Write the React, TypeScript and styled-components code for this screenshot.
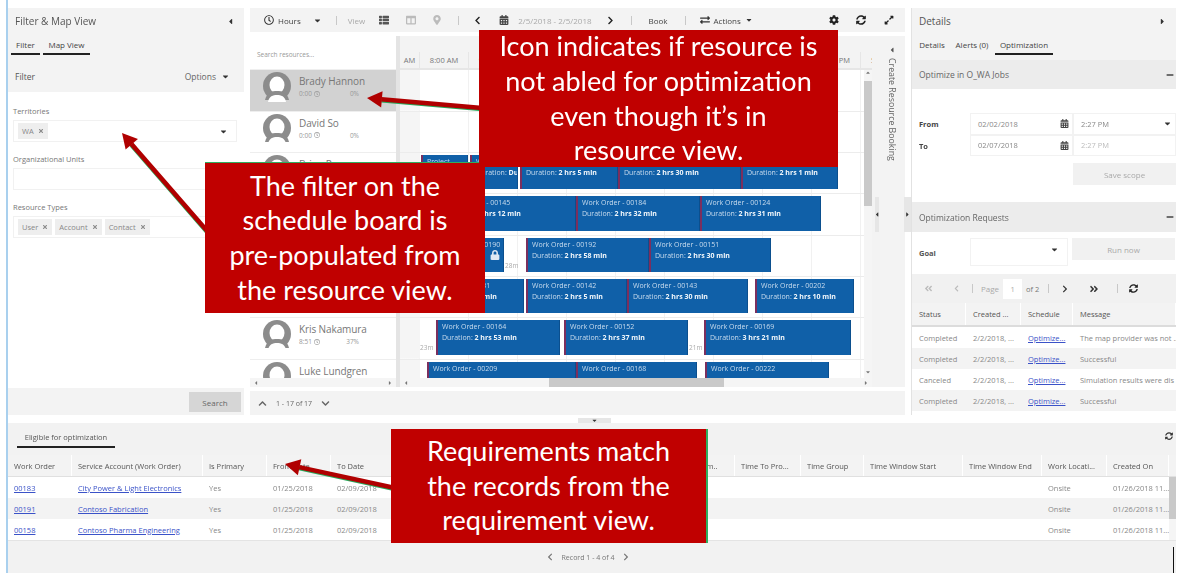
import styled, { createGlobalStyle } from "styled-components";
import {
  FaAngleDoubleLeft,
  FaAngleDoubleRight,
  FaCalendarAlt,
  FaCaretDown,
  FaCaretLeft,
  FaCaretRight,
  FaChevronDown,
  FaChevronLeft,
  FaChevronRight,
  FaChevronUp,
  FaCog,
  FaColumns,
  FaExchangeAlt,
  FaExpandAlt,
  FaLock,
  FaMapMarkerAlt,
  FaMinus,
  FaRegClock,
  FaSyncAlt,
  FaTimes,
  FaThList,
} from "react-icons/fa";

const GlobalStyle = createGlobalStyle`
  html, body {
    margin: 0;
    padding: 0;
    background: #fff;
    overflow: hidden;
  }
  * {
    box-sizing: border-box;
  }
`;

const Page = styled.div`
  position: relative;
  width: 1180px;
  height: 579px;
  overflow: hidden;
  background: #fff;
  font-family: "Open Sans", "Liberation Sans", sans-serif;
`;

// the whole app sits in a blurry pasted screenshot
const Screen = styled.div`
  width: 1170px;
  height: 573px;
  margin-left: 6px;
  padding-top: 8px;
  border-left: 2px solid #a9d0ee;
  filter: blur(0.7px);
  color: #666;
  font-size: 8px;
`;

const TopRow = styled.div`
  display: flex;
  gap: 6px;
  height: 407px;
`;

const SidePanel = styled.aside<{ $width: number }>`
  display: flex;
  flex-direction: column;
  width: ${({ $width }) => $width}px;
  flex: none;
`;

const PanelHead = styled.div`
  display: flex;
  align-items: center;
  justify-content: space-between;
  height: 26px;
  padding: 0 9px 0 7px;
  background: #f3f3f3;
  font-size: 10px;
  color: #555;
`;

const Tabs = styled.div`
  display: flex;
  height: 26px;
  gap: 3px;
  padding: 0 3px;
  background: #f3f3f3;
`;

const Tab = styled.div<{ $active?: boolean; $width: number }>`
  width: ${({ $width }) => $width}px;
  height: 21px;
  padding-top: 5px;
  text-align: center;
  font-size: 8px;
  color: #444;
  border-bottom: ${({ $active }) => ($active ? "2px solid #222" : "2px solid transparent")};
`;

const FilterBar = styled.div`
  display: flex;
  align-items: center;
  justify-content: space-between;
  height: 32px;
  padding: 0 14px 0 7px;
  background: #f3f3f3;
  font-size: 8.5px;
  color: #555;
`;

const OptionsLink = styled.span`
  display: flex;
  align-items: center;
  gap: 5px;
  color: #666;
`;

const FilterBody = styled.div`
  flex: 1;
  padding: 14px 7px 0 5px;
  background: #fff;
`;

const FieldLabel = styled.div`
  height: 14px;
  font-size: 7.5px;
  color: #777;
`;

const FieldBox = styled.div`
  display: flex;
  align-items: center;
  justify-content: space-between;
  gap: 3px;
  height: 22px;
  margin-bottom: 12px;
  padding: 0 8px 0 4px;
  border: 1px solid #f1f1f1;
`;

const ChipRow = styled.div`
  display: flex;
  gap: 3px;
`;

const Chip = styled.span`
  display: flex;
  align-items: center;
  gap: 4px;
  height: 16px;
  padding: 0 4px;
  background: #eeeeee;
  color: #888;
  font-size: 7.5px;
`;

const SearchBar = styled.div`
  display: flex;
  justify-content: flex-end;
  align-items: flex-start;
  height: 27px;
  padding: 4px 3px 0 0;
  background: #f3f3f3;
`;

const FlatButton = styled.div<{ $dark?: boolean; $width: number; $height?: number }>`
  display: flex;
  align-items: center;
  justify-content: center;
  width: ${({ $width }) => $width}px;
  height: ${({ $height }) => $height ?? 20}px;
  background: ${({ $dark }) => ($dark ? "#d6d6d6" : "#f1f1f1")};
  color: ${({ $dark }) => ($dark ? "#666" : "#aaa")};
  font-size: 8px;
`;

const Center = styled.main`
  display: flex;
  flex-direction: column;
  width: 655px;
  flex: none;
`;

const Toolbar = styled.div`
  display: flex;
  align-items: center;
  height: 25px;
  padding-left: 14px;
  background: #f3f3f3;
  font-size: 8px;
  color: #666;
`;

const ToolItem = styled.span<{ $left?: number; $dim?: boolean }>`
  display: flex;
  align-items: center;
  gap: 4px;
  margin-left: ${({ $left }) => $left ?? 0}px;
  color: ${({ $dim }) => ($dim ? "#aaa" : "#444")};
  font-size: 8px;
  white-space: nowrap;
`;

const ToolDivider = styled.span<{ $left: number }>`
  width: 1px;
  height: 9px;
  margin-left: ${({ $left }) => $left}px;
  background: #c8c8c8;
`;

const BoardArea = styled.div`
  display: flex;
  height: 351px;
  margin-top: 4px;
  background: #f3f3f3;
`;

const ResourceColumn = styled.div`
  display: flex;
  flex-direction: column;
  width: 146px;
  flex: none;
  background: #fff;
`;

const SearchResources = styled.div`
  display: flex;
  align-items: center;
  height: 34px;
  padding: 3px 0 0 7px;
  color: #999;
  font-size: 6.5px;
  border-bottom: 1px solid #efefef;
`;

const ResourceList = styled.div`
  flex: 1;
  overflow: hidden;
`;

const ResourceRow = styled.div<{ $selected?: boolean }>`
  display: flex;
  height: 41.3px;
  padding: 2px 0 0 13px;
  gap: 8px;
  background: ${({ $selected }) => ($selected ? "#d2d2d2" : "#fff")};
  border-bottom: 1px solid #eeeeee;
`;

const ResourceInfo = styled.div`
  display: flex;
  flex-direction: column;
  padding-top: 3px;
`;

const ResourceName = styled.div`
  font-size: 10px;
  line-height: 13px;
  color: #777;
  letter-spacing: -0.1px;
`;

const ResourceStats = styled.div`
  display: flex;
  align-items: center;
  gap: 2px;
  width: 60px;
  margin-top: 1px;
  font-size: 6.5px;
  color: #999;
`;

const StatPercent = styled.span`
  margin-left: auto;
`;

const HScrollBar = styled.div<{ $height?: number }>`
  display: flex;
  align-items: center;
  justify-content: space-between;
  height: ${({ $height }) => $height ?? 9}px;
  padding: 0 3px;
  background: #f5f5f5;
  color: #777;
  font-size: 6px;
`;

const Thumb = styled.div<{ $width: number }>`
  width: ${({ $width }) => $width}px;
  height: 100%;
  background: #c9c9c9;
`;

const BoardMain = styled.div`
  display: flex;
  flex-direction: column;
  width: 476px;
  border-left: 4px solid #e4e4e4;
  flex: none;
`;

const TimeHeader = styled.div`
  display: flex;
  height: 34px;
  padding-top: 16px;
  overflow: hidden;
  background: #f3f3f3;
  border-bottom: 2px solid #e6e6e6;
`;

const TimeCell = styled.div<{ $width: number }>`
  width: ${({ $width }) => $width}px;
  flex: none;
  padding-top: 3px;
  text-align: center;
  font-size: 7.5px;
  color: #777;
  border-right: 1px solid #e6e6e6;
  overflow: hidden;
  white-space: nowrap;
`;

const BoardBody = styled.div`
  display: flex;
  flex: 1;
  overflow: hidden;
`;

const Rows = styled.div`
  flex: 1;
  overflow: hidden;
  background: #fff;
`;

const BoardRow = styled.div`
  position: relative;
  height: 41.3px;
  border-bottom: 1px solid #ececec;
  background: linear-gradient(#f5f5f5, #f5f5f5) left / 20px 100% no-repeat,
    repeating-linear-gradient(90deg, transparent 20px, transparent 68px, #f1f1f1 68px, #f1f1f1 69px);
`;

const Booking = styled.div`
  position: absolute;
  top: 2px;
  bottom: 4px;
  overflow: hidden;
  padding: 1px 0 0 4px;
  background: #1060a8;
  border-left: 2px solid #7b2f5e;
  border-right: 1px solid #0b4f8e;
  color: #c9dcee;
  font-size: 7px;
  line-height: 11px;
  white-space: nowrap;
`;

const BookingStrong = styled.b`
  color: #f2f7fb;
`;

const LockMark = styled.span`
  position: absolute;
  right: 3px;
  top: 12px;
  color: #dfe9f3;
  font-size: 10px;
`;

const GapLabel = styled.span`
  position: absolute;
  top: 25px;
  font-size: 6.5px;
  color: #aaa;
`;

const VScroll = styled.div`
  display: flex;
  flex-direction: column;
  width: 8px;
  flex: none;
  background: #f5f5f5;
  color: #777;
  font-size: 6px;
`;

const VThumb = styled.div`
  height: 125px;
  margin-top: 2px;
  background: #c9c9c9;
`;

const ScrollCaret = styled.span<{ $bottom?: boolean }>`
  display: flex;
  justify-content: center;
  height: 9px;
  margin-top: ${({ $bottom }) => ($bottom ? "auto" : "0")};
`;

const BookingRail = styled.div`
  display: flex;
  flex: 1;
  flex-direction: column;
  align-items: center;
  padding-top: 10px;
  margin-left: 6px;
  color: #555;
`;

const RailText = styled.div`
  margin-top: 4px;
  writing-mode: vertical-rl;
  font-size: 8.8px;
  white-space: nowrap;
  color: #666;
`;

const BoardFooter = styled.div`
  display: flex;
  align-items: center;
  height: 24px;
  margin-top: 4px;
  padding-left: 8px;
  gap: 9px;
  background: #f3f3f3;
  color: #666;
  font-size: 7px;
`;

const DetailPanel = styled(SidePanel)`
  border-left: 1px solid #e2e2e2;
`;

const SectionHead = styled.div<{ $height: number }>`
  display: flex;
  align-items: center;
  justify-content: space-between;
  height: ${({ $height }) => $height}px;
  padding: 0 2px 0 7px;
  background: #ececec;
  color: #666;
  font-size: 8.5px;
`;

const ScopeBody = styled.div`
  display: flex;
  flex-direction: column;
  height: 113px;
  padding-top: 24px;
  background: #fff;
`;

const ScopeRow = styled.div`
  display: flex;
  height: 21.5px;
`;

const ScopeLabel = styled.div`
  width: 58px;
  padding: 6px 0 0 7px;
  font-size: 7.5px;
  font-weight: 700;
  color: #444;
  flex: none;
`;

const ScopeInput = styled.div<{ $width: number; $dim?: boolean }>`
  display: flex;
  align-items: center;
  justify-content: space-between;
  width: ${({ $width }) => $width}px;
  padding: 0 3px 0 7px;
  border: 1px solid #f2f2f2;
  color: ${({ $dim }) => ($dim ? "#bbb" : "#888")};
  font-size: 7.5px;
  flex: none;
`;

const ScopeActions = styled.div`
  display: flex;
  justify-content: flex-end;
  margin-top: 7px;
`;

const GoalRow = styled.div`
  display: flex;
  height: 42px;
  padding-top: 6px;
  background: #fff;
`;

const GoalLabel = styled(ScopeLabel)`
  padding-top: 10px;
  color: #555;
`;

const GoalSelect = styled.div`
  display: flex;
  justify-content: flex-end;
  width: 98px;
  height: 28px;
  padding: 6px 8px 0 0;
  border: 1px solid #f2f2f2;
  color: #333;
  flex: none;
`;

const RunWrap = styled.div`
  margin-left: 4px;
`;

const Pager = styled.div`
  display: flex;
  align-items: center;
  height: 29px;
  padding-left: 12px;
  background: #f1f1f1;
  color: #777;
  font-size: 7.5px;
`;

const PageInput = styled.span`
  display: flex;
  align-items: center;
  justify-content: center;
  width: 19px;
  height: 20px;
  margin: 0 4px;
  background: #fff;
  color: #aaa;
`;

const SmallGrid = styled.div<{ $head?: boolean; $shade?: boolean }>`
  display: grid;
  grid-template-columns: 54px 55px 52px 1fr;
  align-items: center;
  height: ${({ $head }) => ($head ? 24 : 21)}px;
  background: ${({ $head, $shade }) => ($head || $shade ? "#f3f3f3" : "#fff")};
  border-bottom: ${({ $head }) => ($head ? "2px solid #dcdcdc" : "0")};
  color: ${({ $head }) => ($head ? "#555" : "#888")};
  font-size: 7.5px;
`;

const SmallCell = styled.div<{ $head?: boolean }>`
  display: flex;
  align-items: center;
  height: 100%;
  padding-left: 7px;
  white-space: nowrap;
  overflow: hidden;
  border-right: ${({ $head }) => ($head ? "1px solid #fff" : "0")};
`;

const Link = styled.span`
  color: #3a52c8;
  text-decoration: underline;
`;

const BottomPanel = styled.section`
  display: flex;
  flex-direction: column;
  height: 150px;
  margin-top: 8px;
  background: #f2f2f2;
`;

const BottomTabs = styled.div`
  display: flex;
  align-items: flex-start;
  justify-content: space-between;
  height: 32px;
  padding: 9px 3px 0 9px;
`;

const BottomTab = styled.div`
  width: 98px;
  height: 16px;
  border-bottom: 2px solid #222;
  text-align: center;
  font-size: 7.5px;
  color: #555;
  white-space: nowrap;
`;

const TABLE_COLS = "64px 131px 64px 64px 64px 275px 65px 66px 63px 99px 79px 65px 62px 1fr";

const TableRow = styled.div<{ $head?: boolean; $shade?: boolean }>`
  display: grid;
  grid-template-columns: ${TABLE_COLS};
  height: ${({ $head }) => ($head ? 22 : 21)}px;
  background: ${({ $head, $shade }) => ($head || $shade ? "#f3f3f3" : "#fff")};
  border-bottom: ${({ $head }) => ($head ? "1px solid #e0e0e0" : "0")};
  color: ${({ $head }) => ($head ? "#555" : "#888")};
  font-size: 7.5px;
`;

const TableCell = styled.div<{ $head?: boolean }>`
  display: flex;
  align-items: center;
  padding-left: 6px;
  white-space: nowrap;
  overflow: hidden;
  border-right: ${({ $head }) => ($head ? "1px solid #fff" : "0")};
`;

const TableScroll = styled.div<{ $thumb?: boolean }>`
  background: ${({ $thumb }) => ($thumb ? "#c9c9c9" : "#f5f5f5")};
`;

const RecordPager = styled.div`
  position: relative;
  display: flex;
  flex: 1;
  align-items: center;
  justify-content: center;
  gap: 8px;
  border-top: 1px solid #e4e4e4;
  color: #777;
  font-size: 7px;
  padding-right: 8px;
`;

const EdgeMark = styled.span`
  position: absolute;
  right: 2px;
  top: 6px;
  bottom: 0;
  width: 1px;
  background: #111;
`;

// little collapse tabs that sit on the splitters between panels
const SplitHandle = styled.div<{ $x: number; $y: number; $w: number; $h: number }>`
  position: absolute;
  left: ${({ $x }) => $x}px;
  top: ${({ $y }) => $y}px;
  width: ${({ $w }) => $w}px;
  height: ${({ $h }) => $h}px;
  display: flex;
  align-items: center;
  justify-content: center;
  background: #e6e6e6;
  color: #333;
`;

const Callout = styled.div<{
  $x: number;
  $y: number;
  $w: number;
  $h: number;
  $z: number;
  $edge?: "top" | "right";
}>`
  position: absolute;
  left: ${({ $x }) => $x}px;
  top: ${({ $y }) => $y}px;
  width: ${({ $w }) => $w}px;
  height: ${({ $h }) => $h}px;
  z-index: ${({ $z }) => $z};
  display: flex;
  flex-direction: column;
  justify-content: center;
  background: #c00000;
  border-right: ${({ $edge }) => ($edge === "right" ? "2px solid #2fae5f" : "0")};
  border-top: ${({ $edge }) => ($edge === "top" ? "1px solid #2fae5f" : "0")};
  color: #fff;
  font-family: Lato, "Open Sans", sans-serif;
  font-size: 27px;
  line-height: 34.7px;
  text-align: center;
`;

const ArrowLayer = styled.svg`
  position: absolute;
  left: 0;
  top: 0;
  z-index: 1;
`;

const hours = ["8:00 AM", "9:00 AM", "10:00 AM", "11:00 AM", "12:00 PM", "1:00 PM", "2:00 PM", "3:00 PM", "4:00 PM", "5:00 PM"];

const resources = [
  { name: "Brady Hannon", time: "0:00", pct: "0%", selected: true },
  { name: "David So", time: "0:00", pct: "0%" },
  { name: "Brian Perry", time: "7:38", pct: "32%" },
  { name: "Chris Gray", time: "7:43", pct: "32%" },
  { name: "Edgar Dominguez", time: "5:28", pct: "23%" },
  { name: "Jorge Gomez", time: "7:45", pct: "32%" },
  { name: "Kris Nakamura", time: "8:51", pct: "37%" },
  { name: "Luke Lundgren", time: "6:10", pct: "26%" },
];

type Item = { x: number; end: number; wo?: string; dur?: string; lock?: boolean };

// x and end are page coordinates of the booking edges
const boardRows: { items: Item[]; gaps?: { x: number; text: string }[] }[] = [
  { items: [] },
  { items: [] },
  {
    items: [
      { x: 421, end: 468, wo: "Project" },
      { x: 470, end: 518, wo: "Work Order - 00117", dur: "Duratio..." },
      { x: 520, end: 618, wo: "Work Order - 00141", dur: "2 hrs 5 min" },
      { x: 618, end: 741, wo: "Work Order - 00182", dur: "2 hrs 30 min" },
      { x: 741, end: 838, wo: "Work Order - 00183", dur: "2 hrs 1 min" },
    ],
  },
  {
    items: [
      { x: 440, end: 576, wo: "Work Order - 00145", dur: "2 hrs 12 min" },
      { x: 576, end: 700, wo: "Work Order - 00184", dur: "2 hrs 32 min" },
      { x: 700, end: 821, wo: "Work Order - 00124", dur: "2 hrs 31 min" },
    ],
  },
  {
    items: [
      { x: 430, end: 504, wo: "Work Order - 00190", lock: true },
      { x: 526, end: 649, wo: "Work Order - 00192", dur: "2 hrs 58 min" },
      { x: 649, end: 771, wo: "Work Order - 00151", dur: "2 hrs 30 min" },
    ],
    gaps: [{ x: 505, text: "28m" }],
  },
  {
    items: [
      { x: 420, end: 524, wo: "Work Order - 00131", dur: "2 hrs 8 min" },
      { x: 526, end: 627, wo: "Work Order - 00142", dur: "2 hrs 5 min" },
      { x: 627, end: 748, wo: "Work Order - 00143", dur: "2 hrs 30 min" },
      { x: 755, end: 854, wo: "Work Order - 00202", dur: "2 hrs 10 min" },
    ],
  },
  {
    items: [
      { x: 436, end: 560, wo: "Work Order - 00164", dur: "2 hrs 53 min" },
      { x: 564, end: 688, wo: "Work Order - 00152", dur: "2 hrs 37 min" },
      { x: 704, end: 851, wo: "Work Order - 00169", dur: "3 hrs 21 min" },
    ],
    gaps: [
      { x: 420, text: "23m" },
      { x: 689, text: "21m" },
    ],
  },
  {
    items: [
      { x: 427, end: 576, wo: "Work Order - 00209" },
      { x: 576, end: 697, wo: "Work Order - 00168" },
      { x: 705, end: 829, wo: "Work Order - 00222" },
    ],
  },
];

const requests = [
  ["Completed", "2/2/2018, ...", "Optimize...", "The map provider was not ..."],
  ["Completed", "2/2/2018, ...", "Optimize...", "Successful"],
  ["Canceled", "2/2/2018, ...", "Optimize...", "Simulation results were dis ..."],
  ["Completed", "2/2/2018, ...", "Optimize...", "Successful"],
];

const tableHead = [
  "Work Order",
  "Service Account (Work Order)",
  "Is Primary",
  "From Date",
  "To Date",
  "",
  "Time From..",
  "Time To Pro...",
  "Time Group",
  "Time Window Start",
  "Time Window End",
  "Work Locati...",
  "Created On",
];

const tableRows = [
  ["00183", "City Power & Light Electronics"],
  ["00191", "Contoso Fabrication"],
  ["00158", "Contoso Pharma Engineering"],
];

function Avatar() {
  return (
    <svg width="28" height="30" viewBox="0 0 28 30">
      <circle cx="14" cy="14" r="14" fill="#8c8c8c" />
      <ellipse cx="14" cy="13" rx="7.5" ry="8.5" fill="#fff" />
      <path d="M2 28 C4 20 9 19 14 19 C19 19 24 20 26 28 Z" fill="#8c8c8c" />
      <path d="M5 30 C6 24 10 23 14 23 C18 23 22 24 23 30 Z" fill="#fff" />
    </svg>
  );
}

function Arrow({ x1, y1, x2, y2 }: { x1: number; y1: number; x2: number; y2: number }) {
  const angle = Math.atan2(y2 - y1, x2 - x1);
  const len = 17;
  const spread = 0.5;
  const neckX = x2 - Math.cos(angle) * len * 0.85;
  const neckY = y2 - Math.sin(angle) * len * 0.85;
  const ax = x2 - Math.cos(angle - spread) * len;
  const ay = y2 - Math.sin(angle - spread) * len;
  const bx = x2 - Math.cos(angle + spread) * len;
  const by = y2 - Math.sin(angle + spread) * len;
  return (
    <g>
      <line x1={x1} y1={y1 + 1} x2={neckX} y2={neckY + 1} stroke="#27a85a" strokeWidth="4.5" />
      <line x1={x1} y1={y1} x2={neckX} y2={neckY} stroke="#b00000" strokeWidth="4.5" />
      <polygon points={`${x2},${y2} ${ax},${ay} ${bx},${by}`} fill="#b00000" />
    </g>
  );
}

function App() {
  return (
    <Page>
      <GlobalStyle />
      <Screen>
        <TopRow>
          <SidePanel $width={236}>
            <PanelHead>
              Filter &amp; Map View
              <FaCaretLeft size={9} color="#333" />
            </PanelHead>
            <Tabs>
              <Tab $active $width={29}>Filter</Tab>
              <Tab $active $width={47}>Map View</Tab>
            </Tabs>
            <FilterBar>
              Filter
              <OptionsLink>
                Options <FaCaretDown size={9} color="#333" />
              </OptionsLink>
            </FilterBar>
            <FilterBody>
              <FieldLabel>Territories</FieldLabel>
              <FieldBox>
                <ChipRow>
                  <Chip>
                    WA <FaTimes size={6} />
                  </Chip>
                </ChipRow>
                <FaCaretDown size={9} color="#333" />
              </FieldBox>
              <FieldLabel>Organizational Units</FieldLabel>
              <FieldBox />
              <FieldLabel>Resource Types</FieldLabel>
              <FieldBox>
                <ChipRow>
                  <Chip>
                    User <FaTimes size={6} />
                  </Chip>
                  <Chip>
                    Account <FaTimes size={6} />
                  </Chip>
                  <Chip>
                    Contact <FaTimes size={6} />
                  </Chip>
                </ChipRow>
              </FieldBox>
            </FilterBody>
            <SearchBar>
              <FlatButton $dark $width={52}>Search</FlatButton>
            </SearchBar>
          </SidePanel>

          <Center>
            <Toolbar>
              <ToolItem>
                <FaRegClock size={10} color="#333" /> Hours
              </ToolItem>
              <ToolItem $left={12}>
                <FaCaretDown size={9} color="#333" />
              </ToolItem>
              <ToolDivider $left={14} />
              <ToolItem $left={11} $dim>View</ToolItem>
              <ToolItem $left={14}>
                <FaThList size={10} color="#555" />
              </ToolItem>
              <ToolItem $left={17}>
                <FaColumns size={10} color="#bbb" />
              </ToolItem>
              <ToolItem $left={16}>
                <FaMapMarkerAlt size={10} color="#bbb" />
              </ToolItem>
              <ToolDivider $left={16} />
              <ToolItem $left={14}>
                <FaChevronLeft size={9} color="#222" />
              </ToolItem>
              <ToolItem $left={17}>
                <FaCalendarAlt size={10} color="#444" />
              </ToolItem>
              <ToolItem $left={9} $dim>2/5/2018 - 2/5/2018</ToolItem>
              <ToolItem $left={14}>
                <FaChevronRight size={9} color="#222" />
              </ToolItem>
              <ToolDivider $left={16} />
              <ToolItem $left={17}>Book</ToolItem>
              <ToolDivider $left={17} />
              <ToolItem $left={14}>
                <FaExchangeAlt size={10} color="#333" /> Actions <FaCaretDown size={8} color="#333" />
              </ToolItem>
              <ToolItem $left={76}>
                <FaCog size={10} color="#222" />
              </ToolItem>
              <ToolItem $left={17}>
                <FaSyncAlt size={10} color="#222" />
              </ToolItem>
              <ToolItem $left={18}>
                <FaExpandAlt size={10} color="#222" />
              </ToolItem>
            </Toolbar>

            <BoardArea>
              <ResourceColumn>
                <SearchResources>Search resources...</SearchResources>
                <ResourceList>
                  {resources.map((r) => (
                    <ResourceRow key={r.name} $selected={r.selected}>
                      <Avatar />
                      <ResourceInfo>
                        <ResourceName>{r.name}</ResourceName>
                        <ResourceStats>
                          {r.time} <FaRegClock size={6} />
                          <StatPercent>{r.pct}</StatPercent>
                        </ResourceStats>
                      </ResourceInfo>
                    </ResourceRow>
                  ))}
                </ResourceList>
                <HScrollBar>
                  <FaCaretLeft />
                  <FaCaretRight />
                </HScrollBar>
              </ResourceColumn>

              <BoardMain>
                <TimeHeader>
                  <TimeCell $width={20}>AM</TimeCell>
                  {hours.map((h) => (
                    <TimeCell key={h} $width={49}>{h}</TimeCell>
                  ))}
                </TimeHeader>
                <BoardBody>
                  <Rows>
                    {boardRows.map((row, i) => (
                      <BoardRow key={i}>
                        {row.items.map((b) => (
                          <Booking key={b.x} style={{ left: b.x - 400, width: b.end - b.x }}>
                            {b.wo}
                            {b.dur && (
                              <div>
                                Duration: <BookingStrong>{b.dur}</BookingStrong>
                              </div>
                            )}
                            {b.lock && (
                              <LockMark>
                                <FaLock />
                              </LockMark>
                            )}
                          </Booking>
                        ))}
                        {row.gaps?.map((g) => (
                          <GapLabel key={g.x} style={{ left: g.x - 400 }}>{g.text}</GapLabel>
                        ))}
                      </BoardRow>
                    ))}
                  </Rows>
                  <VScroll>
                    <ScrollCaret>
                      <FaCaretDown style={{ transform: "rotate(180deg)" }} />
                    </ScrollCaret>
                    <VThumb />
                    <ScrollCaret $bottom>
                      <FaCaretDown />
                    </ScrollCaret>
                  </VScroll>
                </BoardBody>
                <HScrollBar>
                  <FaCaretLeft />
                  <Thumb $width={175} />
                  <FaCaretRight />
                </HScrollBar>
              </BoardMain>

              <BookingRail>
                <FaCaretLeft size={8} />
                <RailText>Create Resource Booking</RailText>
              </BookingRail>
            </BoardArea>

            <BoardFooter>
              <FaChevronUp size={9} />
              1 - 17 of 17
              <FaChevronDown size={9} />
            </BoardFooter>
          </Center>

          <DetailPanel $width={265}>
            <PanelHead>
              Details
              <FaCaretRight size={9} color="#333" />
            </PanelHead>
            <Tabs>
              <Tab $width={34}>Details</Tab>
              <Tab $width={40}>Alerts (0)</Tab>
              <Tab $active $width={58}>Optimization</Tab>
            </Tabs>
            <SectionHead $height={29}>
              Optimize in O_WA Jobs
              <FaMinus size={8} color="#444" />
            </SectionHead>
            <ScopeBody>
              <ScopeRow>
                <ScopeLabel>From</ScopeLabel>
                <ScopeInput $width={103}>
                  02/02/2018 <FaCalendarAlt size={9} color="#444" />
                </ScopeInput>
                <ScopeInput $width={103}>
                  2:27 PM <FaCaretDown size={9} color="#333" />
                </ScopeInput>
              </ScopeRow>
              <ScopeRow>
                <ScopeLabel>To</ScopeLabel>
                <ScopeInput $width={103}>
                  02/07/2018 <FaCalendarAlt size={9} color="#444" />
                </ScopeInput>
                <ScopeInput $width={103} $dim>2:27 PM</ScopeInput>
              </ScopeRow>
              <ScopeActions>
                <FlatButton $width={103} $height={22}>Save scope</FlatButton>
              </ScopeActions>
            </ScopeBody>
            <SectionHead $height={30}>
              Optimization Requests
              <FaMinus size={8} color="#444" />
            </SectionHead>
            <GoalRow>
              <GoalLabel>Goal</GoalLabel>
              <GoalSelect>
                <FaCaretDown size={9} />
              </GoalSelect>
              <RunWrap>
                <FlatButton $width={103} $height={22}>Run now</FlatButton>
              </RunWrap>
            </GoalRow>
            <Pager>
              <FaAngleDoubleLeft size={9} color="#bbb" />
              <ToolItem $left={20}>
                <FaChevronLeft size={7} color="#bbb" />
              </ToolItem>
              <ToolDivider $left={12} />
              <ToolItem $left={8} $dim>Page</ToolItem>
              <PageInput>1</PageInput>
              of 2
              <ToolDivider $left={9} />
              <ToolItem $left={12}>
                <FaChevronRight size={8} color="#333" />
              </ToolItem>
              <ToolItem $left={20}>
                <FaAngleDoubleRight size={10} color="#333" />
              </ToolItem>
              <ToolDivider $left={18} />
              <ToolItem $left={11}>
                <FaSyncAlt size={9} color="#222" />
              </ToolItem>
            </Pager>
            <SmallGrid $head>
              <SmallCell $head>Status</SmallCell>
              <SmallCell $head>Created ...</SmallCell>
              <SmallCell $head>Schedule</SmallCell>
              <SmallCell $head>Message</SmallCell>
            </SmallGrid>
            {requests.map((r, i) => (
              <SmallGrid key={i} $shade={i % 2 === 1}>
                <SmallCell>{r[0]}</SmallCell>
                <SmallCell>{r[1]}</SmallCell>
                <SmallCell>
                  <Link>{r[2]}</Link>
                </SmallCell>
                <SmallCell>{r[3]}</SmallCell>
              </SmallGrid>
            ))}
          </DetailPanel>
        </TopRow>

        <BottomPanel>
          <BottomTabs>
            <BottomTab>Eligible for optimization</BottomTab>
            <FaSyncAlt size={8} color="#333" />
          </BottomTabs>
          <TableRow $head>
            {tableHead.map((h, i) => (
              <TableCell key={i} $head>{h}</TableCell>
            ))}
          </TableRow>
          {tableRows.map((row, i) => (
            <TableRow key={row[0]} $shade={i === 1}>
              <TableCell>
                <Link>{row[0]}</Link>
              </TableCell>
              <TableCell>
                <Link>{row[1]}</Link>
              </TableCell>
              <TableCell>Yes</TableCell>
              <TableCell>01/25/2018</TableCell>
              <TableCell>02/09/2018</TableCell>
              <TableCell />
              <TableCell />
              <TableCell />
              <TableCell />
              <TableCell />
              <TableCell />
              <TableCell>Onsite</TableCell>
              <TableCell>01/26/2018 11...</TableCell>
              <TableScroll $thumb={i < 2} />
            </TableRow>
          ))}
          <RecordPager>
            <FaChevronLeft size={8} />
            Record 1 - 4 of 4
            <FaChevronRight size={8} />
            <EdgeMark />
          </RecordPager>
        </BottomPanel>
      </Screen>

      <SplitHandle $x={875} $y={197} $w={4} $h={35}>
        <FaCaretLeft size={7} />
      </SplitHandle>
      <SplitHandle $x={904} $y={197} $w={7} $h={35}>
        <FaCaretRight size={7} />
      </SplitHandle>
      <SplitHandle $x={578} $y={418} $w={33} $h={5}>
        <FaCaretDown size={7} />
      </SplitHandle>

      <ArrowLayer width="1180" height="579" viewBox="0 0 1180 579">
        <Arrow x1={482} y1={108} x2={367} y2={98} />
        <Arrow x1={215} y1={240} x2={122} y2={133} />
        <Arrow x1={395} y1={488} x2={285} y2={464} />
      </ArrowLayer>

      <Callout $x={479} $y={30} $w={359} $h={137} $z={3}>
        <div>Icon indicates if resource is</div>
        <div>not abled for optimization</div>
        <div>even though it’s in</div>
        <div>resource view.</div>
      </Callout>
      <Callout $x={205} $y={162} $w={280} $h={151} $z={2} $edge="top">
        <div>The filter on the</div>
        <div>schedule board is</div>
        <div>pre-populated from</div>
        <div>the resource view.</div>
      </Callout>
      <Callout $x={391} $y={429} $w={317} $h={114} $z={2} $edge="right">
        <div>Requirements match</div>
        <div>the records from the</div>
        <div>requirement view.</div>
      </Callout>
    </Page>
  );
}

export default App;
